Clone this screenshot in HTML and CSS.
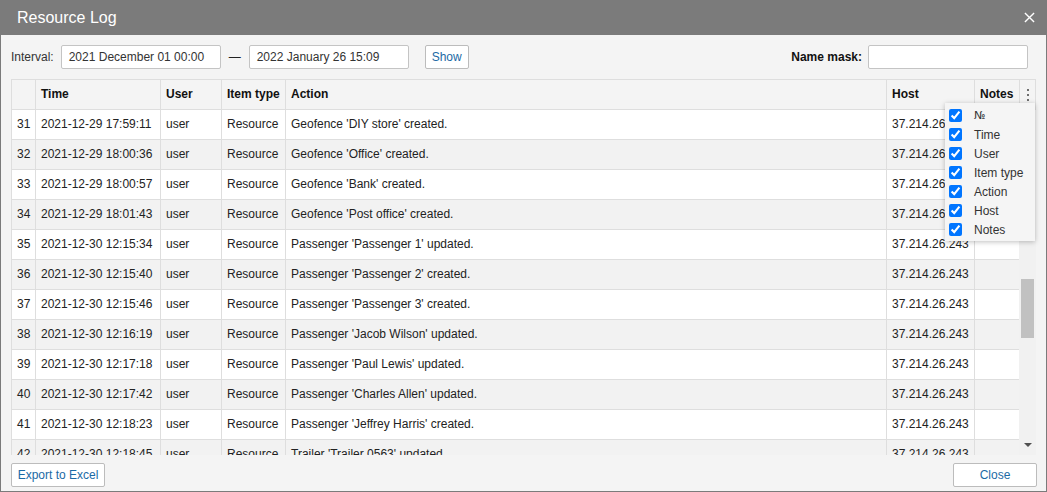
FILE: index.html
```html
<!DOCTYPE html>
<html>
<head>
<meta charset="utf-8">
<link rel="stylesheet" href="styles.css">
</head>
<body>
<div class="window">
  <div class="titlebar">
    <span class="title">Resource Log</span>
    <svg class="close-x" width="12" height="12" viewBox="0 0 12 12"><path d="M1 1L11 11M11 1L1 11" stroke="#fff" stroke-width="1.5" fill="none"/></svg>
  </div>
  <div class="content">
    <div class="toolbar">
      <span class="lbl">Interval:</span>
      <div class="input w160">2021 December 01 00:00</div>
      <span class="dash">—</span>
      <div class="input w160">2022 January 26 15:09</div>
      <button class="btn show">Show</button>
      <span class="spacer"></span>
      <span class="lbl bold">Name mask:</span>
      <div class="input w160"></div>
    </div>
    <div class="tablewrap">
      <div class="thead">
        <div class="row hdr">
          <div class="c"></div><div class="c">Time</div><div class="c">User</div><div class="c">Item type</div><div class="c">Action</div><div class="c">Host</div><div class="c">Notes</div>
          <div class="c kebab"><span></span><span></span><span></span></div>
        </div>
      </div>
      <div class="tbody">
        <div class="rows">
          <div class="row"><div class="c">31</div><div class="c">2021-12-29 17:59:11</div><div class="c">user</div><div class="c">Resource</div><div class="c">Geofence 'DIY store' created.</div><div class="c">37.214.26.243</div><div class="c"></div></div>
          <div class="row alt"><div class="c">32</div><div class="c">2021-12-29 18:00:36</div><div class="c">user</div><div class="c">Resource</div><div class="c">Geofence 'Office' created.</div><div class="c">37.214.26.243</div><div class="c"></div></div>
          <div class="row"><div class="c">33</div><div class="c">2021-12-29 18:00:57</div><div class="c">user</div><div class="c">Resource</div><div class="c">Geofence 'Bank' created.</div><div class="c">37.214.26.243</div><div class="c"></div></div>
          <div class="row alt"><div class="c">34</div><div class="c">2021-12-29 18:01:43</div><div class="c">user</div><div class="c">Resource</div><div class="c">Geofence 'Post office' created.</div><div class="c">37.214.26.243</div><div class="c"></div></div>
          <div class="row"><div class="c">35</div><div class="c">2021-12-30 12:15:34</div><div class="c">user</div><div class="c">Resource</div><div class="c">Passenger 'Passenger 1' updated.</div><div class="c">37.214.26.243</div><div class="c"></div></div>
          <div class="row alt"><div class="c">36</div><div class="c">2021-12-30 12:15:40</div><div class="c">user</div><div class="c">Resource</div><div class="c">Passenger 'Passenger 2' created.</div><div class="c">37.214.26.243</div><div class="c"></div></div>
          <div class="row"><div class="c">37</div><div class="c">2021-12-30 12:15:46</div><div class="c">user</div><div class="c">Resource</div><div class="c">Passenger 'Passenger 3' created.</div><div class="c">37.214.26.243</div><div class="c"></div></div>
          <div class="row alt"><div class="c">38</div><div class="c">2021-12-30 12:16:19</div><div class="c">user</div><div class="c">Resource</div><div class="c">Passenger 'Jacob Wilson' updated.</div><div class="c">37.214.26.243</div><div class="c"></div></div>
          <div class="row"><div class="c">39</div><div class="c">2021-12-30 12:17:18</div><div class="c">user</div><div class="c">Resource</div><div class="c">Passenger 'Paul Lewis' updated.</div><div class="c">37.214.26.243</div><div class="c"></div></div>
          <div class="row alt"><div class="c">40</div><div class="c">2021-12-30 12:17:42</div><div class="c">user</div><div class="c">Resource</div><div class="c">Passenger 'Charles Allen' updated.</div><div class="c">37.214.26.243</div><div class="c"></div></div>
          <div class="row"><div class="c">41</div><div class="c">2021-12-30 12:18:23</div><div class="c">user</div><div class="c">Resource</div><div class="c">Passenger 'Jeffrey Harris' created.</div><div class="c">37.214.26.243</div><div class="c"></div></div>
          <div class="row alt"><div class="c">42</div><div class="c">2021-12-30 12:18:45</div><div class="c">user</div><div class="c">Resource</div><div class="c">Trailer 'Trailer 0563' updated.</div><div class="c">37.214.26.243</div><div class="c"></div></div>
        </div>
        <div class="scrollbar">
          <div class="thumb"></div>
          <div class="arrow-down"></div>
        </div>
      </div>
      <div class="menu">
        <label class="item"><input type="checkbox" checked><span class="num">№</span></label>
        <label class="item"><input type="checkbox" checked><span>Time</span></label>
        <label class="item"><input type="checkbox" checked><span>User</span></label>
        <label class="item"><input type="checkbox" checked><span>Item type</span></label>
        <label class="item"><input type="checkbox" checked><span>Action</span></label>
        <label class="item"><input type="checkbox" checked><span>Host</span></label>
        <label class="item"><input type="checkbox" checked><span>Notes</span></label>
      </div>
    </div>
    <div class="footer">
      <button class="btn export">Export to Excel</button>
      <button class="btn closebtn">Close</button>
    </div>
  </div>
</div>
</body>
</html>
```

FILE: styles.css
```css
* { box-sizing: border-box; }
html, body { margin: 0; padding: 0; }
body {
  font-family: "Liberation Sans", Arial, sans-serif;
  font-size: 12px;
  color: #222;
  background: #fff;
}
.window {
  width: 1047px;
  height: 492px;
  border: 1px solid #7b7b7b;
  border-top: none;
  background: #f4f4f4;
  display: flex;
  flex-direction: column;
}
.titlebar {
  height: 35px;
  background: #7b7b7b;
  display: flex;
  align-items: center;
  justify-content: space-between;
  padding: 0 12px 0 17px;
  margin: 0 -1px;
}
.title {
  color: #fff;
  font-size: 16px;
  padding-top: 1px;
}
.close-x { display: block; width: 11px; height: 11px; }
.content {
  flex: 1;
  display: flex;
  flex-direction: column;
  padding: 10px 9px 0 10px;
}
.toolbar {
  height: 24px;
  display: flex;
  align-items: center;
  margin-right: 9px;
  color: #333;
}
.lbl { margin-right: 7px; white-space: nowrap; }
.bold { font-weight: bold; color: #111; margin-right: 6px; }
.input {
  height: 24px;
  background: #fff;
  border: 1px solid #c4c4c4;
  border-radius: 2px;
  padding: 0 7px;
  display: flex;
  align-items: center;
  color: #333;
  white-space: nowrap;
}
.w160 { width: 160px; }
.dash { width: 28px; text-align: center; color: #222; }
.btn {
  height: 24px;
  background: #fff;
  border: 1px solid #bcbcbc;
  border-radius: 2px;
  color: #1b6aa5;
  font-family: "Liberation Sans", Arial, sans-serif;
  font-size: 12px;
  padding: 0;
  white-space: nowrap;
  cursor: pointer;
}
.show { margin-left: 16px; width: 44px; }
.spacer { flex: 1; }
.tablewrap {
  position: relative;
  margin-top: 10px;
  height: 376px;
  width: 1025px;
  display: flex;
  flex-direction: column;
}
.thead {
  border-top: 1px solid #dedede;
  border-bottom: 1px solid #dedede;
  border-right: 1px solid #dedede;
}
.row {
  display: grid;
  grid-template-columns: 24px 125px 61px 64px 601px 88px 45px;
  height: 30px;
  background: #fff;
}
.row.alt { background: #f2f2f2; }
.row.hdr {
  grid-template-columns: 24px 125px 61px 64px 601px 88px 45px 16px;
  height: 29px;
  background: #f4f4f4;
  font-weight: bold;
  color: #111;
}
.c {
  border-left: 1px solid #dedede;
  padding-left: 5px;
  padding-bottom: 1px;
  display: flex;
  align-items: center;
  white-space: nowrap;
  overflow: hidden;
}
.rows .c { border-bottom: 1px solid #dedede; }
.kebab {
  flex-direction: column;
  justify-content: center;
  align-items: center;
  padding: 0;
  gap: 3px;
}
.kebab span {
  width: 2px;
  height: 2px;
  background: #6f6f6f;
  display: block;
}
.tbody {
  flex: 1;
  display: flex;
  overflow: hidden;
}
.rows {
  width: 1008px;
  overflow: hidden;
}
.scrollbar {
  width: 17px;
  background: #f1f1f1;
  display: flex;
  flex-direction: column;
  align-items: center;
}
.thumb {
  width: 13px;
  height: 59px;
  background: #c1c1c1;
  margin-top: 169px;
}
.arrow-down {
  margin-top: auto;
  margin-bottom: 8px;
  width: 0;
  height: 0;
  border-left: 4px solid transparent;
  border-right: 4px solid transparent;
  border-top: 4px solid #505050;
}
.menu {
  position: absolute;
  left: 934px;
  top: 24px;
  width: 90px;
  padding: 3px 0 2px;
  background: #f5f5f5;
  box-shadow: 0 1px 5px rgba(0,0,0,0.25);
  display: flex;
  flex-direction: column;
}
.item {
  height: 19px;
  display: flex;
  align-items: center;
  color: #333;
}
.item input {
  width: 13px;
  height: 13px;
  margin: 0 12px 0 4px;
  accent-color: #0075ff;
}
.num { font-family: "DejaVu Sans", sans-serif; font-size: 11px; }
.footer {
  display: flex;
  justify-content: space-between;
  margin-top: 8px;
}
.export { width: 94px; }
.closebtn { width: 84px; }
```
